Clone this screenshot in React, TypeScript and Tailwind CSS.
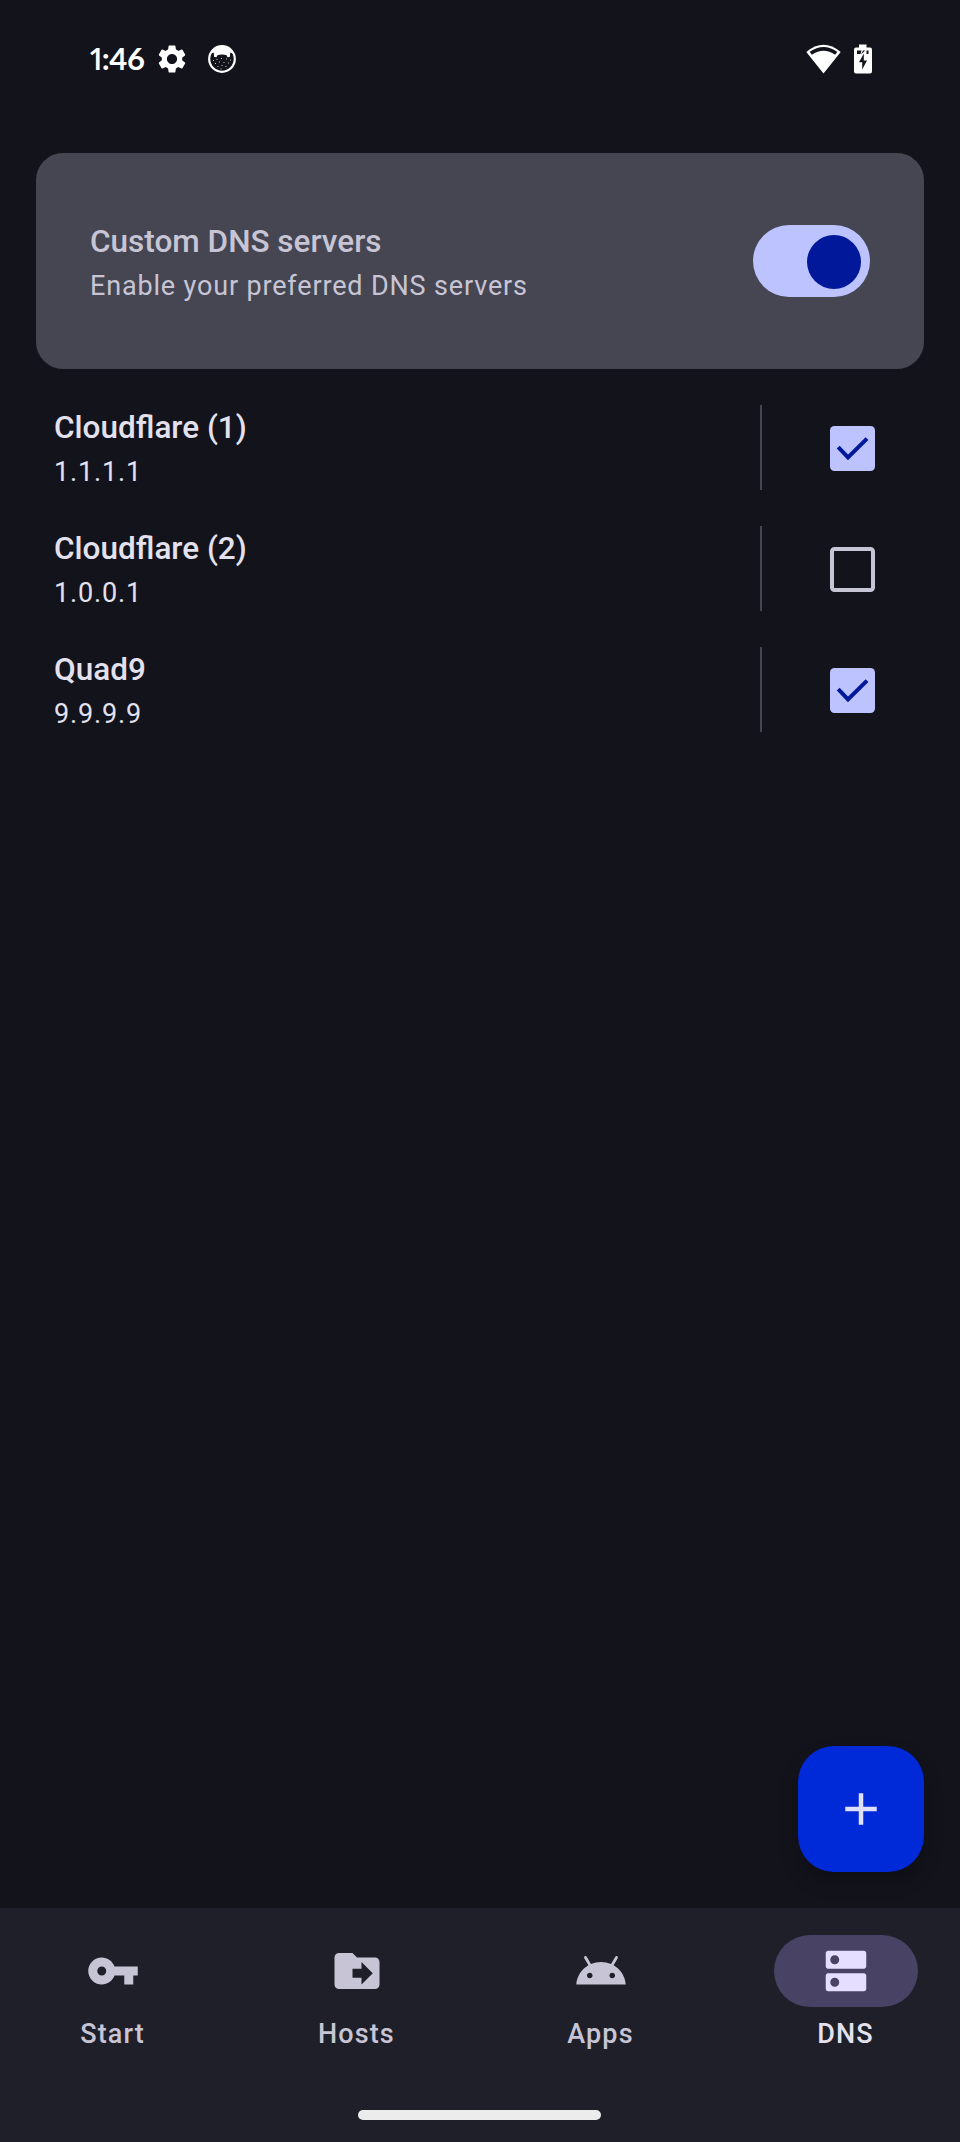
import React from "react";

const ICONS = {
  key: "M12.65 10C11.83 7.67 9.61 6 7 6c-3.31 0-6 2.69-6 6s2.69 6 6 6c2.61 0 4.83-1.67 5.65-4H17v4h4v-4h2v-4H12.65zM7 14c-1.1 0-2-.9-2-2s.9-2 2-2 2 .9 2 2-.9 2-2 2z",
  folder:
    "M14,18V15H10V11H14V8L19,13M20,6H12L10,4H4C2.89,4 2,4.89 2,6V18A2,2 0 0,0 4,20H20A2,2 0 0,0 22,18V8C22,6.89 21.1,6 20,6Z",
  android:
    "M17.6 9.48l1.84-3.18c.16-.31.04-.69-.26-.85-.29-.15-.65-.06-.83.22l-1.88 3.24c-2.86-1.21-6.08-1.21-8.94 0L5.65 5.67c-.19-.29-.58-.38-.87-.2-.28.18-.37.54-.22.83L6.4 9.48C3.3 11.25 1.28 14.44 1 18h22c-.28-3.56-2.3-6.75-5.4-8.52zM7 15.25c-.69 0-1.25-.56-1.25-1.25s.56-1.25 1.25-1.25 1.25.56 1.25 1.25-.56 1.25-1.25 1.25zm10 0c-.69 0-1.25-.56-1.25-1.25s.56-1.25 1.25-1.25 1.25.56 1.25 1.25-.56 1.25-1.25 1.25z",
  dns: "M20 13H4c-.55 0-1 .45-1 1v6c0 .55.45 1 1 1h16c.55 0 1-.45 1-1v-6c0-.55-.45-1-1-1zM7 19c-1.1 0-2-.9-2-2s.9-2 2-2 2 .9 2 2-.9 2-2 2zM20 3H4c-.55 0-1 .45-1 1v6c0 .55.45 1 1 1h16c.55 0 1-.45 1-1V4c0-.55-.45-1-1-1zM7 9c-1.1 0-2-.9-2-2s.9-2 2-2 2 .9 2 2-.9 2-2 2z",
  add: "M19 13h-6v6h-2v-6H5v-2h6V5h2v6h6v2z",
  gear: "M19.14 12.94c.04-.3.06-.61.06-.94 0-.32-.02-.64-.07-.94l2.03-1.58c.18-.14.23-.41.12-.61l-1.92-3.32c-.12-.22-.37-.29-.59-.22l-2.39.96c-.5-.38-1.03-.7-1.62-.94l-.36-2.54c-.04-.24-.24-.41-.48-.41h-3.84c-.24 0-.43.17-.47.41l-.36 2.54c-.59.24-1.13.57-1.62.94l-2.39-.96c-.22-.08-.47 0-.59.22L2.74 8.87c-.12.21-.08.47.12.61l2.03 1.58c-.05.3-.09.63-.09.94s.02.64.07.94l-2.03 1.58c-.18.14-.23.41-.12.61l1.92 3.32c.12.22.37.29.59.22l2.39-.96c.5.38 1.03.7 1.62.94l.36 2.54c.05.24.24.41.48.41h3.84c.24 0 .44-.17.47-.41l.36-2.54c.59-.24 1.13-.56 1.62-.94l2.39.96c.22.08.47 0 .59-.22l1.92-3.32c.12-.22.07-.47-.12-.61l-2.01-1.58zM12 15.6c-1.98 0-3.6-1.62-3.6-3.6s1.62-3.6 3.6-3.6 3.6 1.62 3.6 3.6-1.62 3.6-3.6 3.6z",
};

function Icon({ path, className }: { path: string; className: string }) {
  return (
    <svg viewBox="0 0 24 24" fill="currentColor" className={className}>
      <path d={path} />
    </svg>
  );
}

function StatusBar() {
  return (
    <header className="flex h-[117px] items-center justify-between pr-[88px] pl-[88px] text-white">
      <div className="flex h-[30px] items-center">
        <span className="w-[67px] font-['Lato','Roboto',sans-serif] text-[31px] leading-[30px] font-bold whitespace-nowrap">
          <span className="font-['Open_Sans'] text-[30px] font-semibold tracking-[-3.5px]">1</span>
          <span className="tracking-[-0.3px]">:46</span>
        </span>
        <Icon path={ICONS.gear} className="h-[34px] w-[34px]" />
        <svg viewBox="0 0 28 28" className="ml-[19px] h-7 w-7">
          <circle cx="14" cy="14" r="12.8" fill="none" stroke="#fff" strokeWidth="2.2" />
          <path
            d="M3 8.500C5 4 9 1.500 14 1.500S23 4 25 8.500L22.300 7.500L21.800 12L19.300 12.300L19 10.500C16 9.300 12 9.300 9 10.500L8.700 12.300L6.200 12L5.700 7.500z"
            fill="#fff"
          />
          <path
            d="M5 15.500h1M8.500 14.500h1M13 13.500h1M18 14h1M22 15h1M7 18.500h1M11 17h1M15.500 17.500h1M20 18h1M9.500 21.500h1M13.500 20.500h1M17.500 21.500h1M12.500 24h1"
            stroke="#fff"
            strokeWidth="1.200"
            opacity="0.75"
          />
        </svg>
      </div>
      <div className="flex h-[30px] items-center gap-[13px]">
        <svg viewBox="0 0 35 30" className="h-[30px] w-[35px]">
          <path d="M0.300 8Q17.500-6.500 34.700 8L17.500 29.500z" fill="#fff" />
          <path d="M4.800 9.300Q17.500 0.500 30.200 9.300" fill="none" stroke="#13131c" strokeWidth="3.800" />
        </svg>
        <svg viewBox="0 0 18 30" className="h-[30px] w-[18px]">
          <path d="M5 0.500h7.500v3H16a2 2 0 0 1 2 2v22a2 2 0 0 1-2 2H2a2 2 0 0 1-2-2v-22a2 2 0 0 1 2-2h3z" fill="#fff" />
          <path d="M3 6.500h4.500L6.500 10H3zM9 6.500h2.200L7 10.500zM12.500 6.500h2V10h-2z" fill="#13131c" />
          <path d="M9.800 9.500L5 18.300h3.200v7.200L13 16.500H9.800z" fill="#13131c" />
        </svg>
      </div>
    </header>
  );
}

function Labels({ title, detail }: { title: string; detail: string }) {
  return (
    <div className="flex flex-1 flex-col gap-1">
      <div className="text-[31.5px] leading-[45px] font-medium">{title}</div>
      <div className="text-[27px] leading-9 tracking-[0.84px]">{detail}</div>
    </div>
  );
}

function CheckBox({ checked }: { checked: boolean }) {
  if (!checked) return <div className="h-[45px] w-[45px] rounded-[4.5px] border-4 border-[#c7c5d5]" />;
  return (
    <div className="h-[45px] w-[45px] rounded-[4.5px] bg-[#bcc3ff]">
      <svg viewBox="0 0 45 45" className="h-[45px] w-[45px]">
        <path d="M8.200 21.200L18 31.500L37 12.600" fill="none" stroke="#001899" strokeWidth="4" />
      </svg>
    </div>
  );
}

function ServerRow({ name, address, checked }: { name: string; address: string; checked: boolean }) {
  return (
    <li className="flex h-[121px] items-center pr-[85px] pl-[54px]">
      <Labels title={name} detail={address} />
      <div className="h-[85px] w-0.5 bg-[#454652]" />
      <div className="mt-0.5 ml-[68px]">
        <CheckBox checked={checked} />
      </div>
    </li>
  );
}

function NavItem({ label, path, active = false }: { label: string; path: string; active?: boolean }) {
  return (
    <a
      className={
        active
          ? "ml-auto flex w-[226px] flex-col items-center text-[#e4e1ee]"
          : "mr-[18px] flex w-[226px] flex-col items-center text-[#c7c5d5]"
      }
    >
      <span
        className={
          active
            ? "flex h-[72px] w-36 items-center justify-center rounded-full bg-[#484264] text-[#e5deff]"
            : "flex h-[72px] w-36 items-center justify-center"
        }
      >
        <Icon path={path} className="h-[54px] w-[54px]" />
      </span>
      <span className="mt-[9px] pr-px text-[27px] leading-9 font-medium tracking-[1.1px]">{label}</span>
    </a>
  );
}

export default function App() {
  return (
    <div className="flex h-[2142px] w-[960px] flex-col bg-[#13131c] font-['Roboto',sans-serif] text-[#e4e1ee]">
      <StatusBar />
      <main className="flex flex-1 flex-col pt-9">
        <section className="mx-9 flex h-[216px] items-center rounded-[27px] bg-[#454652] px-[54px] text-[#c7c5d5]">
          <Labels title="Custom DNS servers" detail="Enable your preferred DNS servers" />
          <div className="flex h-[72px] w-[117px] items-center justify-end rounded-full bg-[#bcc3ff] pt-px pr-[9px]">
            <div className="h-[54px] w-[54px] rounded-full bg-[#001899]" />
          </div>
        </section>
        <ul className="mt-[18px]">
          <ServerRow name="Cloudflare (1)" address="1.1.1.1" checked />
          <ServerRow name="Cloudflare (2)" address="1.0.0.1" checked={false} />
          <ServerRow name="Quad9" address="9.9.9.9" checked />
        </ul>
        <button className="mt-auto mr-9 mb-9 flex h-[126px] w-[126px] items-center justify-center self-end rounded-[36px] bg-[#0029d8] text-[#dfe0ff] shadow-[0_10px_18px_rgba(0,0,0,0.25)]">
          <Icon path={ICONS.add} className="h-[54px] w-[54px]" />
        </button>
      </main>
      <nav className="flex h-[234px] flex-col items-center bg-[#1f1f29] pt-[27px]">
        <div className="flex w-full pr-px">
          <NavItem label="Start" path={ICONS.key} />
          <NavItem label="Hosts" path={ICONS.folder} />
          <NavItem label="Apps" path={ICONS.android} />
          <NavItem label="DNS" path={ICONS.dns} active />
        </div>
        <div className="mt-[58px] mr-px h-[10px] w-[243px] rounded-full bg-[#ececec]" />
      </nav>
    </div>
  );
}
